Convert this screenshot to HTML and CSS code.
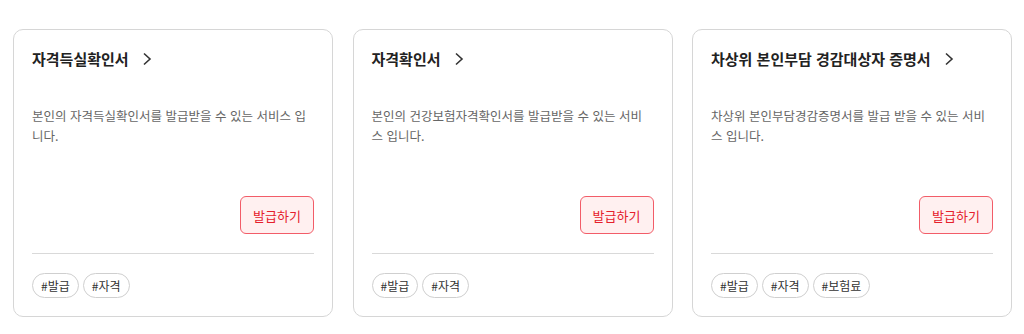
FILE: index.html
```html
<!DOCTYPE html>
<html lang="ko">
<head>
<meta charset="utf-8">
<link rel="stylesheet" href="styles.css">
</head>
<body>
<div class="cards">
  <div class="card">
    <div class="title">자격득실확인서 <svg class="chev" width="10" height="14" viewBox="0 0 10 14"><polyline points="2,1.5 8,7 2,12.5" fill="none" stroke="#333" stroke-width="1.6"/></svg></div>
    <p class="desc">본인의 자격득실확인서를 발급받을 수 있는 서비스 입니다.</p>
    <div class="actions"><button class="btn">발급하기</button></div>
    <div class="divider"></div>
    <div class="tags"><span class="tag">#발급</span><span class="tag">#자격</span></div>
  </div>
  <div class="card">
    <div class="title">자격확인서 <svg class="chev" width="10" height="14" viewBox="0 0 10 14"><polyline points="2,1.5 8,7 2,12.5" fill="none" stroke="#333" stroke-width="1.6"/></svg></div>
    <p class="desc">본인의 건강보험자격확인서를 발급받을 수 있는 서비스 입니다.</p>
    <div class="actions"><button class="btn">발급하기</button></div>
    <div class="divider"></div>
    <div class="tags"><span class="tag">#발급</span><span class="tag">#자격</span></div>
  </div>
  <div class="card">
    <div class="title">차상위 본인부담 경감대상자 증명서 <svg class="chev" width="10" height="14" viewBox="0 0 10 14"><polyline points="2,1.5 8,7 2,12.5" fill="none" stroke="#333" stroke-width="1.6"/></svg></div>
    <p class="desc">차상위 본인부담경감증명서를 발급 받을 수 있는 서비스 입니다.</p>
    <div class="actions"><button class="btn">발급하기</button></div>
    <div class="divider"></div>
    <div class="tags"><span class="tag">#발급</span><span class="tag">#자격</span><span class="tag">#보험료</span></div>
  </div>
</div>
</body>
</html>
```

FILE: styles.css
```css
* { box-sizing: border-box; }
html, body { margin: 0; padding: 0; background: #fff; }
body {
  font-family: "Noto Sans CJK KR", "Noto Sans", sans-serif;
  color: #222;
  padding: 29px 0 0 13px;
}
.cards {
  display: grid;
  grid-template-columns: 320px 320px 320px;
  column-gap: 19.5px;
}
.card {
  height: 288px;
  border: 1px solid #d6d6d6;
  border-radius: 10px;
  padding: 17px 18px 18px 18px;
  display: flex;
  flex-direction: column;
}
.title {
  font-size: 15px;
  font-weight: 700;
  line-height: 24px;
  color: #222;
  display: flex;
  align-items: center;
  gap: 13px;
}
.chev { display: block; }
.desc {
  margin: 35px 0 0 0;
  font-size: 12.5px;
  line-height: 20px;
  color: #666;
  padding-right: 4px;
}
.actions {
  margin-top: auto;
  display: flex;
  justify-content: flex-end;
}
.btn {
  width: 74px;
  height: 38px;
  border: 1px solid #f25c68;
  background: #fff0f0;
  color: #e5202c;
  border-radius: 6px;
  font-family: inherit;
  font-size: 13px;
  padding: 0;
}
.divider {
  height: 1px;
  background: #d9d9d9;
  margin-top: 19px;
}
.tags {
  display: flex;
  gap: 4px;
  margin-top: 19px;
}
.tag {
  height: 25px;
  padding: 0 8px;
  border: 1px solid #cfcfcf;
  border-radius: 13px;
  font-size: 12px;
  line-height: 23px;
  color: #333;
}
```
